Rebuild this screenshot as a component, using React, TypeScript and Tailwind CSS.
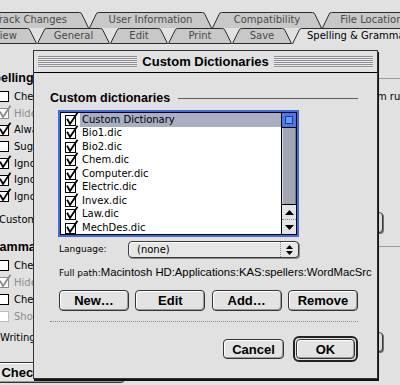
import React from "react";

const bold = "font-['Liberation_Sans',Arial,sans-serif] font-bold";
const helv = "font-['Liberation_Sans',Arial,sans-serif]";

const dictionaries = [
  "Custom Dictionary",
  "Bio1.dic",
  "Bio2.dic",
  "Chem.dic",
  "Computer.dic",
  "Electric.dic",
  "Invex.dic",
  "Law.dic",
  "MechDes.dic",
];

type TabProps = {
  w: number;
  label: string;
  className?: string;
  active?: boolean;
  closed?: boolean;
};

function Tab({ w, label, className = "", active = false, closed = false }: TabProps) {
  const d = `M0.5 ${closed ? 15.5 : 16} L7 2.5 Q7.6 0.5 9.5 0.5 L${w - 9.5} 0.5 Q${w - 7.6} 0.5 ${w - 7} 2.5 L${w - 0.5} ${closed ? "15.5 Z" : 16}`;
  return (
    <div
      className={`relative flex h-[16px] shrink-0 items-center ${
        active ? "justify-start pl-[15px] text-black" : "justify-center text-[#4a4a4a]"
      } ${className}`}
    >
      <svg className="absolute inset-0" width={w} height="16" viewBox={`0 0 ${w} 16`}>
        <path d={d} fill={active ? "#e1e1e1" : "#c8c8c8"} stroke="#2b2b2b" strokeWidth="1" />
      </svg>
      <span className="relative whitespace-nowrap leading-none">{label}</span>
    </div>
  );
}

function Box({ checked = false, dim = false, dotted = false }) {
  const c = dim ? "#8c8c8c" : "#000";
  return (
    <svg width="14" height="14" viewBox="0 0 14 14" className="shrink-0 overflow-visible">
      <rect
        x="0.5"
        y="2.5"
        width="10"
        height="10"
        fill="#fff"
        stroke={c}
        strokeDasharray={dotted ? "1 1" : undefined}
      />
      {checked && (
        <path d="M2.5 6.5 L5 11 L12 0.5" fill="none" stroke={c} strokeWidth="1.8" strokeLinecap="square" />
      )}
    </svg>
  );
}

function Opt({ label, checked, dim, dotted }: { label: string; checked?: boolean; dim?: boolean; dotted?: boolean }) {
  return (
    <div className={`flex shrink-0 items-center gap-[2px] whitespace-nowrap ${dim ? "text-[#8c8c8c]" : ""}`}>
      <Box checked={checked} dim={dim} dotted={dotted} />
      <span>{label}</span>
    </div>
  );
}

function GroupHead({ label }: { label: string }) {
  return (
    <div className="ml-[-15px] flex h-[14px] items-center">
      <span className={`${bold} text-[12.5px] leading-none`}>{label}</span>
      <div className="ml-[6px] h-px flex-1 bg-[#9a9a9a]" />
    </div>
  );
}

function Button({ label, className = "" }: { label: string; className?: string }) {
  return (
    <div
      className={`flex items-center justify-center rounded-[4px] border border-[#333] bg-[#e3e3e3] shadow-[inset_-1px_-1px_0_#9a9a9a,inset_1px_1px_0_#fff] ${bold} text-[13px] leading-none ${className}`}
    >
      {label}
    </div>
  );
}

function Popup({ className = "" }: { className?: string }) {
  return (
    <div
      className={`rounded-[4px] border border-[#3a3a3a] bg-[#dcdcdc] shadow-[1px_1px_0_#707070,inset_1px_1px_0_#fff] ${className}`}
    />
  );
}

function Panel() {
  return (
    <div className="flex flex-col pt-[27px]">
      <GroupHead label="Spelling" />
      <div className="ml-[-2px] mt-[3px] flex flex-col">
        <div className="flex h-[16.7px] items-center">
          <div className="w-[249px] shrink-0">
            <Opt label="Check spelling as you type" />
          </div>
          <Opt label="Use German post-reform rules" />
        </div>
        <div className="flex h-[16.7px] items-center">
          <Opt label="Hide spelling errors in this document" checked dim />
        </div>
        <div className="flex h-[16.7px] items-center">
          <Opt label="Always suggest corrections" checked />
        </div>
        <div className="flex h-[16.7px] items-center">
          <Opt label="Suggest from main dictionary only" />
        </div>
        <div className="flex h-[16.7px] items-center">
          <Opt label="Ignore words in UPPERCASE" checked />
        </div>
        <div className="flex h-[16.7px] items-center">
          <Opt label="Ignore words with numbers" checked />
        </div>
        <div className="flex h-[16.7px] items-center">
          <Opt label="Ignore Internet and file addresses" checked />
        </div>
      </div>
      <div className="ml-[-1px] mt-[7px] flex h-[21px] items-center">
        <span className="pb-[6px] whitespace-nowrap">Custom dictionary:</span>
        <Popup className="ml-auto mr-[17px] h-[21px] w-[160px]" />
      </div>
      <div className="mt-[7px]">
        <GroupHead label="Grammar" />
      </div>
      <div className="ml-[-2px] mt-[3px] flex flex-col">
        <div className="flex h-[17px] items-center">
          <Opt label="Check grammar as you type" />
        </div>
        <div className="flex h-[17px] items-center">
          <Opt label="Hide grammatical errors in this document" checked dim />
        </div>
        <div className="flex h-[17px] items-center">
          <Opt label="Check grammar with spelling" />
        </div>
        <div className="flex h-[17px] items-center">
          <Opt label="Show readability statistics" dim dotted />
        </div>
      </div>
      <div className="mt-[7px] flex h-[20px] items-center">
        <span className="pb-[8px] whitespace-nowrap">Writing style:</span>
        <Popup className="ml-auto mr-[17px] h-[20px] w-[160px]" />
      </div>
      <Button label="Check Document" className="ml-[-16px] mt-[10px] h-[21px] w-[141px]" />
    </div>
  );
}

function Scrollbar() {
  return (
    <div className="flex w-[15px] flex-col border-l border-black">
      <div className="flex h-[15px] items-center justify-center border-b border-black bg-[#4b79ea]">
        <div className="h-[8px] w-[8px] border border-[#1c3c9c] bg-[#7097f2]" />
      </div>
      <div className="flex-1 border-l border-r border-l-[#d4d6de] border-r-[#767985] bg-[#a3a6b2]" />
      <div className="flex h-[15px] items-center justify-center border-t border-black bg-[#e4e4e4]">
        <svg width="9" height="5" viewBox="0 0 9 5">
          <path d="M0 5 L4.5 0 L9 5Z" fill="#000" />
        </svg>
      </div>
      <div className="flex h-[15px] items-center justify-center border-t border-dotted border-[#8a8a8a] bg-[#e4e4e4]">
        <svg width="9" height="5" viewBox="0 0 9 5">
          <path d="M0 0 L4.5 5 L9 0Z" fill="#000" />
        </svg>
      </div>
    </div>
  );
}

function TitleStripes() {
  return (
    <div className="h-[12px] flex-1 bg-[image:repeating-linear-gradient(to_bottom,#8d8d96_0_1px,#ececec_1px_2px)]" />
  );
}

function Dialog() {
  return (
    <div className="absolute left-[33px] top-[50px] flex h-[329px] w-[345px] flex-col border border-[#333] bg-[#e1e1e1] shadow-[1px_2px_0_#111]">
      <div className="flex h-[22px] shrink-0 items-center gap-[5px] border-b border-black px-[4px]">
        <TitleStripes />
        <span className={`${bold} text-[13px] leading-none`}>Custom Dictionaries</span>
        <TitleStripes />
      </div>
      <div className="flex flex-col pl-[16px] pr-[19px]">
        <div className="mt-[18px] flex items-center">
          <span className={`${bold} text-[12.5px] leading-[14px]`}>Custom dictionaries</span>
          <div className="ml-[8px] h-px flex-1 bg-[#5c5c5c]" />
        </div>

        <div className="ml-[8px] mt-[5px] h-[127px] w-[241px] border-2 border-[#3a6ce8]">
          <div className="flex h-full border border-black bg-white">
            <div className="flex flex-1 flex-col">
              {dictionaries.map((name, i) => (
                <div key={name} className="flex h-[13.5px] items-center pl-[4px]">
                  <Box checked />
                  <span
                    className={`ml-[1px] flex h-full flex-1 items-center pl-[2px] leading-none ${
                      i === 0 ? "bg-[#aaaec2]" : ""
                    }`}
                  >
                    {name}
                  </span>
                </div>
              ))}
            </div>
            <Scrollbar />
          </div>
        </div>

        <div className="ml-[9px] mt-[4px] flex items-center">
          <span className="w-[69px] text-[9px]">Language:</span>
          <div className="flex h-[17px] w-[171px] items-center rounded-[4px] border border-[#3a3a3a] bg-[#e6e6e6] shadow-[1px_1px_0_#8a8a8a,inset_1px_1px_0_#fff]">
            <span className="flex-1 pl-[8px] leading-none">(none)</span>
            <div className="flex h-full w-[18px] flex-col items-center justify-center gap-[2px] border-l border-dotted border-[#8a8a8a]">
              <svg width="7" height="4" viewBox="0 0 7 4">
                <path d="M0 4 L3.5 0 L7 4Z" fill="#000" />
              </svg>
              <svg width="7" height="4" viewBox="0 0 7 4">
                <path d="M0 0 L3.5 4 L7 0Z" fill="#000" />
              </svg>
            </div>
          </div>
        </div>

        <div className="ml-[9px] mt-[8px] flex items-baseline whitespace-nowrap leading-[13px]">
          <span className="text-[9px]">Full path:</span>
          <span className={`${helv} text-[11.3px]`}>Macintosh HD:Applications:KAS:spellers:WordMacSrc</span>
        </div>

        <div className="ml-[9px] mt-[10px] flex w-[299px] justify-between">
          <Button label="New…" className="h-[21px] w-[70px]" />
          <Button label="Edit" className="h-[21px] w-[70px]" />
          <Button label="Add…" className="h-[21px] w-[70px]" />
          <Button label="Remove" className="h-[21px] w-[70px]" />
        </div>

        <div className="mt-[10px] border-t border-dotted border-[#8a8a8a]" />

        <div className="mt-[14px] flex items-center justify-end gap-[9px]">
          <Button label="Cancel" className="h-[20px] w-[61px]" />
          <div className="rounded-[6px] border-2 border-[#222] bg-[#e1e1e1] p-[1px]">
            <Button label="OK" className="h-[20px] w-[59px]" />
          </div>
        </div>
      </div>
    </div>
  );
}

export default function App() {
  return (
    <div className="relative h-[385px] w-[400px] overflow-hidden bg-[#e1e1e1] font-['DejaVu_Sans',sans-serif] text-[10px] text-black">
      <div className="pt-[12px]">
        <div className="flex h-[16px]">
          <Tab w={117} className="ml-[-28px] w-[117px]" label="Track Changes" />
          <Tab w={123} className="w-[123px]" label="User Information" />
          <Tab w={110} className="w-[110px]" label="Compatibility" />
          <Tab w={104} className="w-[104px]" label="File Locations" />
        </div>
        <div className="flex h-[16px]">
          <Tab w={64} className="ml-[-27px] w-[64px]" label="View" closed />
          <Tab w={73} className="w-[73px]" label="General" closed />
          <Tab w={58} className="w-[58px]" label="Edit" closed />
          <Tab w={64} className="w-[64px]" label="Print" closed />
          <Tab w={60} className="w-[60px]" label="Save" closed />
          <Tab w={130} className="w-[130px]" label="Spelling & Grammar" active />
        </div>
        <Panel />
      </div>
      <Dialog />
    </div>
  );
}
